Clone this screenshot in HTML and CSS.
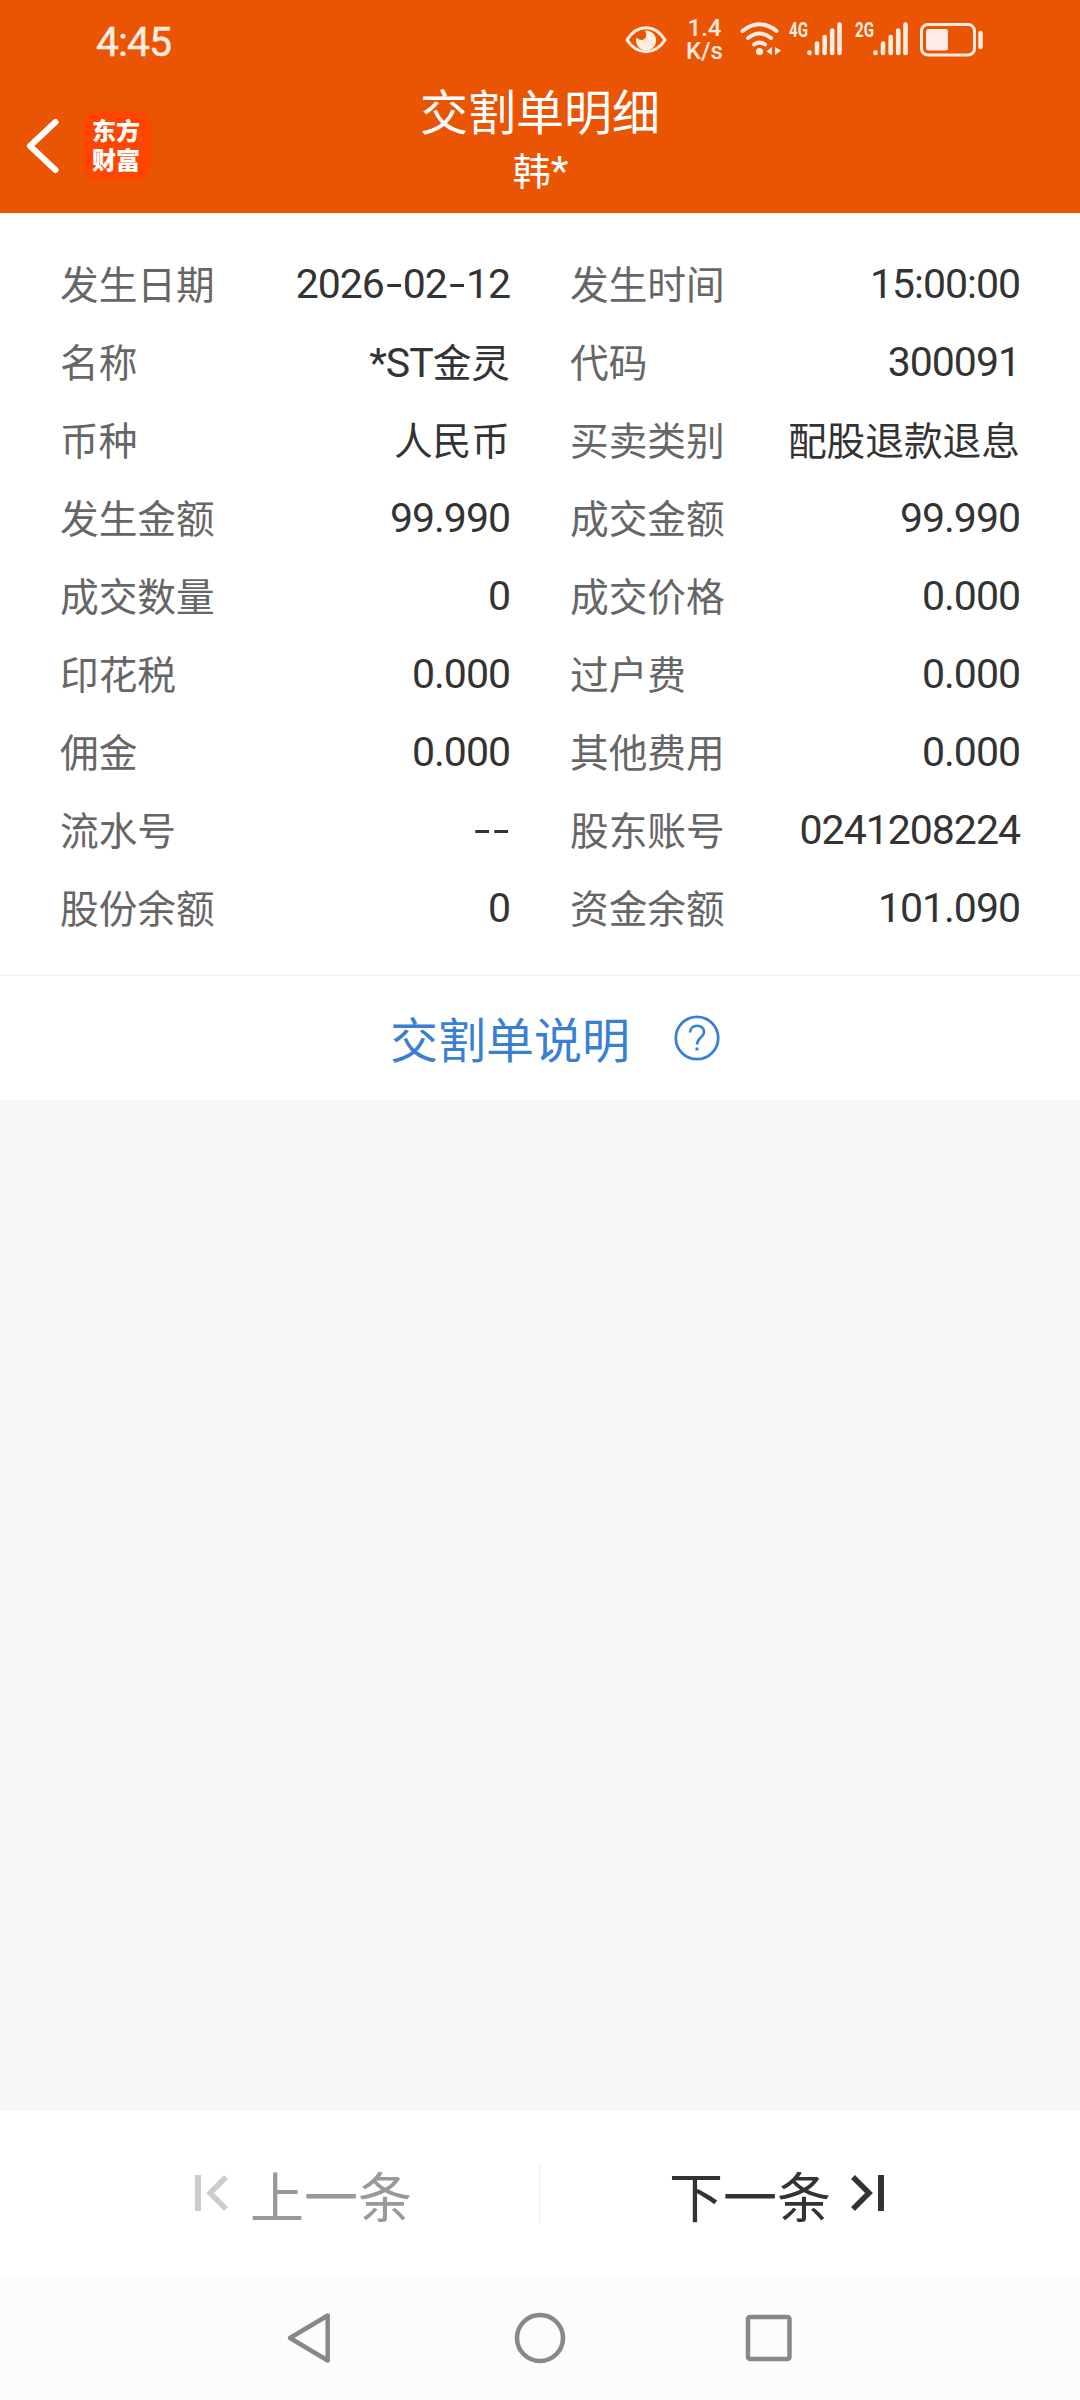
FILE: index.html
```
<!DOCTYPE html>
<html lang="zh-CN">
<head>
    <meta charset="UTF-8">
    <meta name="viewport" content="width=device-width, initial-scale=1.0">
    <title>交割单明细</title>
    <link rel="stylesheet" href="styles.css">
</head>
<body>

<header>
    <div class="status-bar">
        <div class="clock">4:45</div>
        <div class="status-icons">
            <svg class="eye" width="42" height="28" viewBox="0 0 42 28">
                <path d="M2 14C12-2.500 30-2.500 40 14C30 29.500 12 29.500 2 14Z" fill="none" stroke="#ffece0" stroke-width="3" stroke-linejoin="round"/>
                <path d="M20 4.500A10 10 0 1 1 11.500 11.500Q16 16 20 12.500Q22.500 9 20 4.500Z" fill="#ffece0"/>
            </svg>
            <div class="speed"><span>1.4</span><span>K/s</span></div>
            <svg class="wifi" width="42" height="34" viewBox="0 0 42 34">
                <g fill="none" stroke="#ffece0" stroke-width="4" stroke-linecap="round">
                    <path d="M2.500 9Q19.500-4.500 36.500 9"/>
                    <path d="M8 16Q19.500 7 31 16"/>
                    <path d="M14 22.500Q19.500 18.500 25 22.500"/>
                </g>
                <circle cx="19.500" cy="29.500" r="3.500" fill="#ffece0"/>
                <path d="M32 25V33L26.500 29.500ZM35 25L41 28.500L35 33Z" fill="#ffece0"/>
            </svg>
            <svg class="signal" width="54" height="34" viewBox="0 0 54 34">
                <text x="0" y="15" textLength="19" lengthAdjust="spacingAndGlyphs">4G</text>
                <path d="M20.500 30.500V31M28 21.500V31M35.700 15V31M43.200 8.500V31M50.500 2.500V31" stroke="#ffece0" stroke-width="4.600" stroke-linecap="round"/>
            </svg>
            <svg class="signal second" width="54" height="34" viewBox="0 0 54 34">
                <text x="0" y="15" textLength="19" lengthAdjust="spacingAndGlyphs">2G</text>
                <path d="M20.500 30.500V31M28 21.500V31M35.700 15V31M43.200 8.500V31M50.500 2.500V31" stroke="#ffece0" stroke-width="4.600" stroke-linecap="round"/>
            </svg>
            <svg class="battery" width="64" height="34" viewBox="0 0 64 34">
                <rect x="1.500" y="1.500" width="53" height="30.500" rx="6.500" fill="none" stroke="#ffece0" stroke-width="3"/>
                <rect x="6" y="6" width="22" height="21.500" rx="2.500" fill="#ffece8"/>
                <path d="M60.500 10V24" stroke="#ffece0" stroke-width="4.500" stroke-linecap="round"/>
            </svg>
        </div>
    </div>
    <div class="title-bar">
        <div class="title-left">
            <svg width="34" height="56" viewBox="0 0 34 56">
                <path d="M29.500 4L4 28L29.500 52" fill="none" stroke="#fff" stroke-width="6" stroke-linecap="round" stroke-linejoin="round"/>
            </svg>
            <div class="logo">东方<br>财富</div>
        </div>
        <div class="title">
            <h1>交割单明细</h1>
            <p>韩<span class="num">*</span></p>
        </div>
    </div>
</header>

<main>
    <div class="detail">
        <div class="item"><span>发生日期</span><b class="num">2026<i>-</i>02<i>-</i>12</b></div>
        <div class="item"><span>发生时间</span><b class="num">15:00:00</b></div>
        <div class="item"><span>名称</span><b><span class="num">*ST</span>金灵</b></div>
        <div class="item"><span>代码</span><b class="num">300091</b></div>
        <div class="item"><span>币种</span><b>人民币</b></div>
        <div class="item"><span>买卖类别</span><b>配股退款退息</b></div>
        <div class="item"><span>发生金额</span><b class="num">99.990</b></div>
        <div class="item"><span>成交金额</span><b class="num">99.990</b></div>
        <div class="item"><span>成交数量</span><b class="num">0</b></div>
        <div class="item"><span>成交价格</span><b class="num">0.000</b></div>
        <div class="item"><span>印花税</span><b class="num">0.000</b></div>
        <div class="item"><span>过户费</span><b class="num">0.000</b></div>
        <div class="item"><span>佣金</span><b class="num">0.000</b></div>
        <div class="item"><span>其他费用</span><b class="num">0.000</b></div>
        <div class="item"><span>流水号</span><b class="num"><i>-</i><i>-</i></b></div>
        <div class="item"><span>股东账号</span><b class="num">0241208224</b></div>
        <div class="item"><span>股份余额</span><b class="num">0</b></div>
        <div class="item"><span>资金余额</span><b class="num">101.090</b></div>
    </div>
    <a class="help">
        <span>交割单说明</span>
        <svg width="46" height="46" viewBox="0 0 46 46" fill="none" stroke="#3b7fd4">
            <circle cx="23" cy="23" r="21.200" stroke-width="2.800"/>
            <path d="M16 17.500C16 8.500 30 8.500 30 17C30 22 23 23 23 29.500" stroke-width="2.600"/>
            <path d="M23 32.500V35.500" stroke-width="3"/>
        </svg>
    </a>
</main>

<footer>
    <div class="prev">
        <svg width="33" height="36" viewBox="0 0 33 36" fill="none" stroke="#ccc">
            <path d="M3 0V36" stroke-width="6"/>
            <path d="M31 2L15 18L31 34" stroke-width="5.500"/>
        </svg>
        <span>上一条</span>
    </div>
    <div class="next">
        <span>下一条</span>
        <svg width="33" height="36" viewBox="0 0 33 36" fill="none" stroke="#333">
            <path d="M30 0V36" stroke-width="6"/>
            <path d="M2 2L18 18L2 34" stroke-width="5.500"/>
        </svg>
    </div>
</footer>

<nav>
    <svg width="52" height="52" viewBox="0 0 52 52"><path d="M42.700 3.500V48.500L5 26Z"/></svg>
    <svg width="52" height="52" viewBox="0 0 52 52"><circle cx="26" cy="26" r="23"/></svg>
    <svg width="52" height="52" viewBox="0 0 52 52"><rect x="5" y="5" width="41.500" height="42" rx="2"/></svg>
</nav>

</body>
</html>
```
FILE: styles.css
```
* {
    box-sizing: border-box;
}
body {
    display: flex;
    flex-direction: column;
    height: 2400px;
    margin: 0;
    font-family: "Noto Sans CJK SC", sans-serif;
    background-color: #f6f8fa;
}
svg {
    display: block;
    flex: none;
    overflow: visible;
}
header {
    height: 213px;
    background-color: #ea5504;
    color: #fff;
}
.status-bar {
    display: flex;
    justify-content: space-between;
    height: 80px;
    padding: 0 96px 0 96px;
    color: #ffece0;
    font-family: Roboto, sans-serif;
}
.clock {
    padding-top: 18px;
    font-size: 41px;
    line-height: 48px;
    letter-spacing: -1px;
    -webkit-text-stroke: 0.4px #ffece0;
}
.status-icons {
    display: flex;
    align-items: flex-start;
    padding-top: 22px;
}
.eye {
    margin-top: 4px;
}
.speed {
    display: flex;
    flex-direction: column;
    width: 37px;
    margin: -5px 17px 0 19px;
    font-size: 24px;
    font-weight: 500;
    line-height: 23px;
    text-align: center;
}
.signal {
    margin-left: 7px;
}
.signal.second {
    margin-left: 12px;
}
.signal text {
    font-size: 20px;
    font-weight: 700;
    fill: #ffece0;
}
.battery {
    margin: 1px 0 0 11px;
}
.title-bar {
    display: grid;
    grid-template-columns: 1fr auto 1fr;
    height: 133px;
}
.title-left {
    display: flex;
    align-items: center;
    gap: 23px;
    padding: 0 0 2px 26px;
}
.logo {
    width: 68px;
    height: 68px;
    padding-top: 3px;
    padding-right: 2px;
    border-radius: 15px;
    background-color: #ff4500;
    font-size: 24px;
    font-weight: 900;
    line-height: 29px;
    text-align: center;
}
.title {
    text-align: center;
}
.title h1 {
    margin: -2px 0 0;
    font-size: 48px;
    font-weight: 400;
    line-height: 62px;
}
.title p {
    margin: 1px 0 0;
    font-size: 38px;
    line-height: 56px;
}
main {
    flex: 1;
}
.detail {
    display: grid;
    grid-template-columns: 1fr 1fr;
    column-gap: 60px;
    padding: 32px 60px 28px;
    background-color: #fff;
}
.item {
    display: flex;
    justify-content: space-between;
    align-items: center;
    height: 78px;
    font-size: 38.700px;
    color: #666;
}
.item > span, .item > b:not(.num) {
    padding-bottom: 5px;
}
.item b {
    font-weight: 400;
    color: #333;
}
.num {
    font-family: Roboto, sans-serif;
    font-size: 41px;
    letter-spacing: -1px;
}
.num i {
    display: inline-block;
    width: 19px;
    font-style: normal;
    text-align: center;
    transform: scaleX(1.4);
}
.help {
    display: flex;
    justify-content: center;
    align-items: center;
    gap: 44px;
    height: 125px;
    padding-left: 30px;
    border-top: 1px solid #eee;
    background-color: #fff;
    color: #3b7fd4;
    font-size: 48px;
}
.help span {
    padding-bottom: 3px;
}
footer {
    display: flex;
    height: 165px;
    background-color: #fff;
    font-size: 54px;
}
.prev, .next {
    display: flex;
    width: 540px;
    align-items: center;
    height: 60px;
    margin-top: 52px;
    line-height: 60px;
}
.prev span, .next span {
    padding-top: 3px;
}
.prev {
    gap: 22px;
    padding-left: 195px;
    border-right: 1px solid #eee;
    color: #999;
}
.next {
    gap: 20px;
    padding-left: 129px;
    color: #333;
}
nav {
    display: flex;
    justify-content: center;
    align-items: center;
    gap: 177px;
    height: 124px;
    background-color: #fcfcfc;
}
nav svg {
    fill: none;
    stroke: #888;
    stroke-width: 4.500;
    stroke-linejoin: round;
}
```
